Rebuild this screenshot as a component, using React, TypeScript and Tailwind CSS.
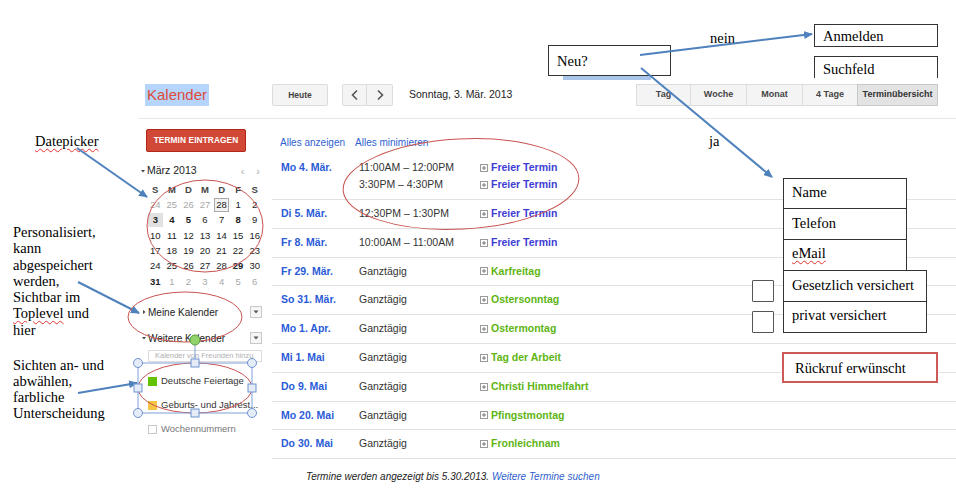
import React from "react";

type Row = { date: string; time: string; title: string; kind: "free" | "hol" };

const rows: Row[] = [
  { date: "Di 5. Mär.", time: "12:30PM – 1:30PM", title: "Freier Termin", kind: "free" },
  { date: "Fr 8. Mär.", time: "10:00AM – 11:00AM", title: "Freier Termin", kind: "free" },
  { date: "Fr 29. Mär.", time: "Ganztägig", title: "Karfreitag", kind: "hol" },
  { date: "So 31. Mär.", time: "Ganztägig", title: "Ostersonntag", kind: "hol" },
  { date: "Mo 1. Apr.", time: "Ganztägig", title: "Ostermontag", kind: "hol" },
  { date: "Mi 1. Mai", time: "Ganztägig", title: "Tag der Arbeit", kind: "hol" },
  { date: "Do 9. Mai", time: "Ganztägig", title: "Christi Himmelfahrt", kind: "hol" },
  { date: "Mo 20. Mai", time: "Ganztägig", title: "Pfingstmontag", kind: "hol" },
  { date: "Do 30. Mai", time: "Ganztägig", title: "Fronleichnam", kind: "hol" },
];

type Day = { n: number; other?: boolean; bold?: boolean; boxed?: boolean; sel?: boolean };
const days: Day[] = [
  { n: 24, other: true }, { n: 25, other: true }, { n: 26, other: true }, { n: 27, other: true },
  { n: 28, boxed: true }, { n: 1 }, { n: 2 },
  { n: 3, sel: true, bold: true }, { n: 4, bold: true }, { n: 5, bold: true }, { n: 6 }, { n: 7 }, { n: 8, bold: true }, { n: 9 },
  { n: 10 }, { n: 11 }, { n: 12 }, { n: 13 }, { n: 14 }, { n: 15 }, { n: 16 },
  { n: 17 }, { n: 18 }, { n: 19 }, { n: 20 }, { n: 21 }, { n: 22 }, { n: 23 },
  { n: 24 }, { n: 25 }, { n: 26 }, { n: 27 }, { n: 28 }, { n: 29, bold: true }, { n: 30 },
  { n: 31, bold: true }, { n: 1, other: true }, { n: 2, other: true }, { n: 3, other: true }, { n: 4, other: true }, { n: 5, other: true }, { n: 6, other: true },
];

function PlusBox() {
  return (
    <svg width="8" height="8" viewBox="0 0 8 8" className="shrink-0">
      <rect x="0.5" y="0.5" width="7" height="7" fill="#fff" stroke="#9a9a9a" />
      <path d="M2 4h4M4 2v4" stroke="#777" />
    </svg>
  );
}

function Caret({ down }: { down?: boolean }) {
  return (
    <svg width="6" height="6" viewBox="0 0 6 6" className="shrink-0">
      {down ? <path d="M1 2h4L3 4.5z" fill="#444" /> : <path d="M2 1v4l2.5-2z" fill="#444" />}
    </svg>
  );
}

function DropBox() {
  return (
    <div className="w-[12px] h-[12px] border border-[#c8c8c8] bg-[#f6f6f6] flex items-center justify-center">
      <svg width="6" height="4" viewBox="0 0 6 4"><path d="M0.5 0.5h5L3 3.5z" fill="#555" /></svg>
    </div>
  );
}

function Chevron({ right }: { right?: boolean }) {
  return (
    <svg width="8" height="12" viewBox="0 0 8 12">
      <path d={right ? "M2 1.5L6.5 6L2 10.5" : "M6 1.5L1.5 6L6 10.5"} fill="none" stroke="#555" strokeWidth="1.6" />
    </svg>
  );
}

function Event({ r }: { r: Row }) {
  return (
    <div className="flex items-center gap-[3px]">
      <PlusBox />
      <span className={r.kind === "free" ? "font-bold text-[#3d3dd4]" : "font-bold text-[#5eb513]"}>{r.title}</span>
    </div>
  );
}

const viewBtns = [
  { l: "Tag", w: "w-[54px]" },
  { l: "Woche", w: "w-[56px]" },
  { l: "Monat", w: "w-[56px]" },
  { l: "4 Tage", w: "w-[55px]" },
];

export default function App() {
  const blue = "#4f81bd";
  const red = "#c8534f";
  return (
    <div className="relative w-[956px] h-[499px] bg-white overflow-hidden font-['Liberation_Sans',Arial,sans-serif] text-[#333]">
      {/* Calendar screenshot */}
      <div className="pl-[138px] pt-[84px]">
        {/* header */}
        <div className="flex items-center h-[22px]">
          <div className="w-[134px] flex items-center">
            <span className="ml-[7px] px-[2px] bg-[#b5d5fd] text-[#dd4b39] text-[15px] leading-[22px]">Kalender</span>
          </div>
          <div className="w-[56px] h-[22px] border border-[#dcdcdc] bg-[#f4f4f4] rounded-[2px] flex items-center justify-center text-[8.5px] font-bold text-[#444]">
            Heute
          </div>
          <div className="ml-[14px] flex h-[22px]">
            <div className="w-[25px] h-[22px] border border-[#dcdcdc] bg-[#f4f4f4] rounded-l-[2px] flex items-center justify-center">
              <Chevron />
            </div>
            <div className="w-[26px] h-[22px] border border-l-0 border-[#dcdcdc] bg-[#f4f4f4] rounded-r-[2px] flex items-center justify-center">
              <Chevron right />
            </div>
          </div>
          <div className="ml-[16px] text-[10.5px] text-[#222]">Sonntag, 3. Mär. 2013</div>
          <div className="ml-auto mr-[18px] flex h-[22px]">
            {viewBtns.map((b) => (
              <div
                key={b.l}
                className={`${b.w} h-[22px] border border-r-0 border-[#dcdcdc] bg-[#f4f4f4] flex items-center justify-center text-[9px] font-bold text-[#444]`}
              >
                {b.l}
              </div>
            ))}
            <div className="w-[81px] h-[22px] border border-[#c8c8c8] bg-[#e3e3e3] flex items-center justify-center text-[9px] font-bold text-[#333]">
              Terminübersicht
            </div>
          </div>
        </div>
        <div className="mt-[12px] h-px bg-[#e8e8e8]" />

        {/* body */}
        <div className="flex">
          {/* sidebar */}
          <div className="w-[134px] shrink-0">
            <div className="ml-[8px] mt-[10px] w-[100px] h-[23px] bg-[#d14836] border border-[#b0281a] rounded-[2px] flex items-center justify-center text-white text-[8.3px] font-bold tracking-[0.1px]">
              TERMIN EINTRAGEN
            </div>
            <div className="mt-[13px] h-[12px] flex items-center">
              <div className="ml-[1px] w-[8px] flex justify-center"><Caret down /></div>
              <span className="text-[10.5px] text-[#222]">März 2013</span>
              <span className="ml-auto text-[#aaa] text-[11px] leading-none flex gap-[12px] mr-[12px]">
                <span>‹</span>
                <span>›</span>
              </span>
            </div>
            <div className="ml-[9px] mt-[5px] w-[116px] grid grid-cols-7 text-[9.5px]">
              {["S", "M", "D", "M", "D", "F", "S"].map((d, i) => (
                <div key={"h" + i} className="h-[15.3px] flex items-center justify-center font-bold text-[#444]">
                  {d}
                </div>
              ))}
              {days.map((d, i) => (
                <div key={i} className="h-[15.3px] flex items-center justify-center">
                  <span
                    className={[
                      "w-[15px] h-[14px] flex items-center justify-center leading-none",
                      d.other ? "text-[#a8a8a8]" : "text-[#222]",
                      d.bold ? "font-bold" : "",
                      d.boxed ? "border border-[#aaa] bg-[#f2f2f2]" : "",
                      d.sel ? "bg-[#e1e1e1]" : "",
                    ].join(" ")}
                  >
                    {d.n}
                  </span>
                </div>
              ))}
            </div>
            <div className="mt-[15px] h-[16px] flex items-center text-[10px] text-[#222]">
              <div className="ml-[1px] w-[9px] flex justify-center"><Caret /></div>
              <span>Meine Kalender</span>
              <div className="ml-auto mr-[10px]"><DropBox /></div>
            </div>
            <div className="mt-[10px] h-[16px] flex items-center text-[10px] text-[#222]">
              <div className="ml-[1px] w-[9px] flex justify-center"><Caret down /></div>
              <span>Weitere Kalender</span>
              <div className="ml-auto mr-[10px]"><DropBox /></div>
            </div>
            <div className="mt-[4px] ml-[10px] w-[114px] h-[12px] border border-[#dcdcdc] whitespace-nowrap text-[7.5px] leading-[10px] text-[#b0b0b0] pl-[6px]">
              Kalender von Freunden hinzu
            </div>
            <div className="mt-[12px] h-[14px] ml-[10px] flex items-center gap-[4px] text-[9.5px] text-[#333]">
              <div className="w-[9px] h-[9px] bg-[#64c300]" />
              <span>Deutsche Feiertage</span>
            </div>
            <div className="mt-[10px] h-[14px] ml-[10px] flex items-center gap-[4px] text-[9.5px] text-[#333] whitespace-nowrap">
              <div className="w-[9px] h-[9px] bg-[#f6c543] shrink-0" />
              <span>Geburts- und Jahrest...</span>
            </div>
            <div className="mt-[10px] h-[14px] ml-[10px] flex items-center gap-[4px] text-[9.5px] text-[#777]">
              <div className="w-[9px] h-[9px] border border-[#c8c8c8] bg-white" />
              <span>Wochennummern</span>
            </div>
          </div>

          {/* main agenda */}
          <div className="flex-1 text-[10.5px]">
            <div className="mt-[15px] h-[16px] pl-[8px] flex items-center gap-[10px] text-[10px] text-[#2f5fd0]">
              <span>Alles anzeigen</span>
              <span>Alles minimieren</span>
            </div>
            <div className="mt-[3px] pt-[6px] pb-[6px] pl-[9px] flex border-b border-[#e2e2e2]">
              <div className="w-[78px] h-[17px] flex items-center font-bold text-[#2a5bd7]">Mo 4. Mär.</div>
              <div className="flex flex-col">
                <div className="flex h-[17px] items-center">
                  <div className="w-[121px] text-[#333]">11:00AM – 12:00PM</div>
                  <Event r={{ date: "", time: "", title: "Freier Termin", kind: "free" }} />
                </div>
                <div className="flex h-[17px] items-center">
                  <div className="w-[121px] text-[#333]">3:30PM – 4:30PM</div>
                  <Event r={{ date: "", time: "", title: "Freier Termin", kind: "free" }} />
                </div>
              </div>
            </div>
            {rows.map((r, i) => (
              <div key={i} className="h-[28.8px] pl-[9px] flex items-center border-b border-[#e2e2e2]">
                <div className="w-[78px] font-bold text-[#2a5bd7]">{r.date}</div>
                <div className="w-[121px] text-[#333]">{r.time}</div>
                <Event r={r} />
              </div>
            ))}
            <div className="mt-[10px] h-[14px] pl-[34px] flex items-center italic text-[10px] text-[#222]">
              <span>Termine werden angezeigt bis 5.30.2013.&nbsp;</span>
              <span className="text-[#2f5fd0]">Weitere Termine suchen</span>
            </div>
          </div>
        </div>
      </div>

      {/* Annotations: light strip under Neu box */}
      <div className="absolute left-[563px] top-[76px] w-[88px] h-[4px] bg-[#a9c6ea]" />

      {/* annotation boxes */}
      <div className="absolute inset-0 font-['Liberation_Serif','Times_New_Roman',serif] text-[14.5px] text-black">
        <div className="absolute left-[35px] top-[133px] leading-[16px] underline decoration-wavy decoration-[#e03030] decoration-1 underline-offset-2">
          Datepicker
        </div>
        <div className="absolute left-[13px] top-[224px] leading-[16.3px] w-[100px]">
          Personalisiert,
          <br />kann
          <br />abgespeichert
          <br />werden,
          <br />Sichtbar im
          <br />
          <span className="underline decoration-wavy decoration-[#e03030] decoration-1 underline-offset-2">Toplevel</span> und
          <br />hier
        </div>
        <div className="absolute left-[13px] top-[357px] leading-[16px] w-[110px]">
          Sichten an- und
          <br />abwählen,
          <br />farbliche
          <br />Unterscheidung
        </div>

        <div className="absolute left-[548px] top-[45px] w-[123px] h-[31px] border border-[#333] bg-white flex items-center pl-[8px] leading-[16px]">
          Neu?
        </div>
        <div className="absolute left-[710px] top-[30px] leading-[16px]">nein</div>
        <div className="absolute left-[709px] top-[133px] leading-[16px]">ja</div>

        <div className="absolute left-[814px] top-[24px] w-[124px] h-[23px] border border-[#333] bg-white flex items-center pl-[8px] leading-[16px]">
          Anmelden
        </div>
        <div className="absolute left-[814px] top-[56px] w-[124px] h-[22px] border border-b-0 border-[#333] bg-white pl-[8px] pt-[4px] leading-[16px]">
          Suchfeld
        </div>

        <div className="absolute left-[783px] top-[178px] w-[124px] h-[31px] border border-[#333] bg-white pl-[8px] pt-[5px] leading-[16px]">
          Name
        </div>
        <div className="absolute left-[783px] top-[208px] w-[124px] h-[32px] border border-[#333] bg-white pl-[8px] pt-[6px] leading-[16px]">
          Telefon
        </div>
        <div className="absolute left-[783px] top-[239px] w-[124px] h-[32px] border border-[#333] bg-white pl-[8px] pt-[5px] leading-[16px]">
          <span className="underline decoration-wavy decoration-[#e03030] decoration-1 underline-offset-2">eMail</span>
        </div>
        <div className="absolute left-[783px] top-[270px] w-[144px] h-[32px] border border-[#333] bg-white pl-[8px] pt-[6px] leading-[16px]">
          Gesetzlich versichert
        </div>
        <div className="absolute left-[783px] top-[301px] w-[144px] h-[32px] border border-[#333] bg-white pl-[8px] pt-[5px] leading-[16px]">
          privat versichert
        </div>
        <div className="absolute left-[752px] top-[280px] w-[22px] h-[22px] border border-[#555] bg-white rounded-[1px]" />
        <div className="absolute left-[752px] top-[311px] w-[22px] h-[22px] border border-[#555] bg-white rounded-[1px]" />

        <div className="absolute left-[782px] top-[352px] w-[156px] h-[31px] border-2 border-[#cc5b57] bg-white pl-[11px] pt-[6px] leading-[16px]">
          Rückruf erwünscht
        </div>
      </div>

      {/* drawings: arrows, ellipses, selection handles */}
      <svg className="absolute inset-0 pointer-events-none" width="956" height="499" viewBox="0 0 956 499">
        <defs>
          <marker id="ah" markerWidth="9" markerHeight="8" refX="8" refY="4" orient="auto" markerUnits="userSpaceOnUse">
            <path d="M0,0 L9,4 L0,8 z" fill={blue} />
          </marker>
        </defs>
        <line x1="640" y1="55" x2="812" y2="34" stroke={blue} strokeWidth="2" markerEnd="url(#ah)" />
        <line x1="641" y1="68" x2="772" y2="177" stroke={blue} strokeWidth="2" markerEnd="url(#ah)" />
        <line x1="77" y1="148" x2="147" y2="197" stroke={blue} strokeWidth="2" markerEnd="url(#ah)" />
        <line x1="78" y1="282" x2="139" y2="313" stroke={blue} strokeWidth="2" markerEnd="url(#ah)" />
        <line x1="78" y1="393" x2="137" y2="383" stroke={blue} strokeWidth="2" markerEnd="url(#ah)" />

        <ellipse cx="205" cy="226" rx="58" ry="46" fill="none" stroke={red} strokeWidth="1" />
        <ellipse cx="185" cy="317" rx="57" ry="25" fill="none" stroke={red} strokeWidth="1" />
        <ellipse cx="195" cy="388" rx="57" ry="25" fill="none" stroke={red} strokeWidth="1" />
        <ellipse cx="461" cy="184" rx="118" ry="45" fill="none" stroke={red} strokeWidth="1" transform="rotate(-3 461 184)" />

        <rect x="138" y="363" width="114" height="50" fill="none" stroke="#7c9fd8" strokeWidth="1" />
        <line x1="195" y1="345" x2="195" y2="359" stroke="#7c9fd8" strokeWidth="1" />
        <circle cx="195" cy="340" r="5" fill="#8fd36a" stroke="#5a9a3c" strokeWidth="1" />
        {[
          [138, 363],
          [252, 363],
          [138, 413],
          [252, 413],
        ].map(([x, y], i) => (
          <circle key={"c" + i} cx={x} cy={y} r="4.5" fill="#e4ecf8" stroke="#6f93d0" strokeWidth="1" />
        ))}
        {[
          [195, 363],
          [138, 388],
          [252, 388],
          [195, 413],
        ].map(([x, y], i) => (
          <rect key={"s" + i} x={x - 4} y={y - 4} width="8" height="8" fill="#e4ecf8" stroke="#6f93d0" strokeWidth="1" />
        ))}
      </svg>
    </div>
  );
}
